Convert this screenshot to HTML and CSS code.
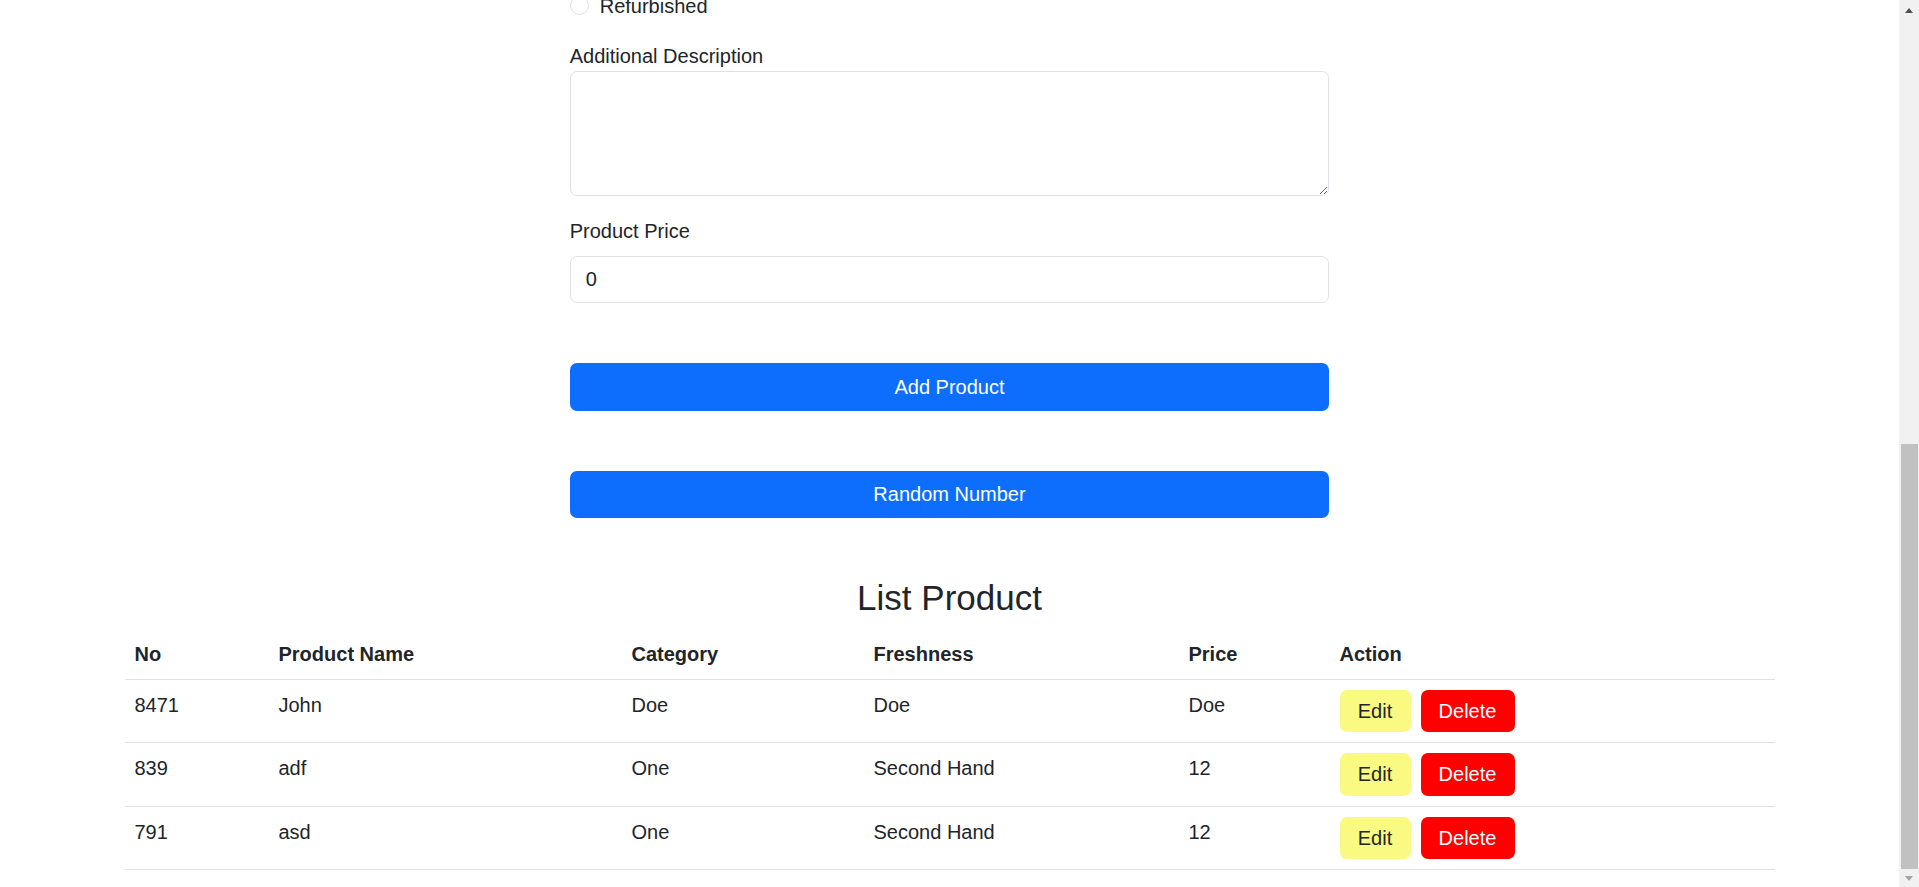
FILE: index.html
```html
<!DOCTYPE html>
<html lang="en">
<head>
<meta charset="utf-8">
<title>Product</title>
<link rel="stylesheet" href="styles.css">
</head>
<body>
<main class="page">
  <form class="product-form" onsubmit="return false">
    <div class="field">
      <label class="check"><input class="radio" type="radio" name="fresh"><span>Refurbished</span></label>
    </div>
    <div class="field">
      <label class="label-plain" for="pdesc">Additional Description</label>
      <textarea class="control area" id="pdesc"></textarea>
    </div>
    <div class="field">
      <label class="label-spaced" for="pprice">Product Price</label>
      <input class="control" id="pprice" type="text" value="0">
    </div>
    <button class="btn-primary add-btn" type="submit">Add Product</button>
    <button class="btn-primary random-btn" type="button">Random Number</button>
  </form>

  <section class="list">
    <h3 class="list-title">List Product</h3>
    <table class="product-table">
      <thead>
        <tr>
          <th class="c-no">No</th>
          <th class="c-name">Product Name</th>
          <th class="c-cat">Category</th>
          <th class="c-fresh">Freshness</th>
          <th class="c-price">Price</th>
          <th class="c-action">Action</th>
        </tr>
      </thead>
      <tbody>
        <tr>
          <td>8471</td><td>John</td><td>Doe</td><td>Doe</td><td>Doe</td>
          <td><div class="actions"><button class="btn-edit" type="button">Edit</button><button class="btn-delete" type="button">Delete</button></div></td>
        </tr>
        <tr>
          <td>839</td><td>adf</td><td>One</td><td>Second Hand</td><td>12</td>
          <td><div class="actions"><button class="btn-edit" type="button">Edit</button><button class="btn-delete" type="button">Delete</button></div></td>
        </tr>
        <tr>
          <td>791</td><td>asd</td><td>One</td><td>Second Hand</td><td>12</td>
          <td><div class="actions"><button class="btn-edit" type="button">Edit</button><button class="btn-delete" type="button">Delete</button></div></td>
        </tr>
      </tbody>
    </table>
  </section>
</main>

<div class="scrollbar" aria-hidden="true">
  <span class="sb-btn sb-up"><span class="arrow-up"></span></span>
  <span class="sb-track"><span class="sb-thumb"></span></span>
  <span class="sb-btn sb-down"><span class="arrow-down"></span></span>
</div>

<script src="script.js"></script>
</body>
</html>
```

FILE: styles.css
```css
* { box-sizing: border-box; }

html, body {
  margin: 0;
  padding: 0;
}

body {
  padding-right: 20px;
  font-family: "Liberation Sans", Arial, sans-serif;
  font-size: 20px;
  line-height: 1.5;
  color: #212529;
  background: #fff;
}

/* window scrollbar as shown in the screenshot */
.scrollbar {
  position: fixed;
  top: 0;
  right: 0;
  width: 20px;
  height: 100vh;
  display: flex;
  flex-direction: column;
  background: #f1f1f1;
}
.sb-btn {
  display: flex;
  align-items: center;
  justify-content: center;
  flex: none;
}
.sb-up { height: 20px; }
.sb-down { height: 18px; }
.sb-track {
  flex: 1;
  display: flex;
  flex-direction: column;
  justify-content: flex-end;
}
.sb-thumb {
  display: block;
  height: 425px;
  margin: 0 1px 0 2px;
  background: #c1c1c1;
}
.arrow-up {
  width: 0;
  height: 0;
  border-left: 4.5px solid transparent;
  border-right: 4.5px solid transparent;
  border-bottom: 5px solid #505050;
}
.arrow-down {
  width: 0;
  height: 0;
  border-left: 4.5px solid transparent;
  border-right: 4.5px solid transparent;
  border-top: 5px solid #a3a3a3;
}

.product-form {
  width: 40%;
  margin: 0 auto;
}

.field { margin-bottom: 20px; }

.label-spaced {
  display: block;
  margin-bottom: 10px;
}
.label-plain {
  display: block;
  margin: 0;
}

.control {
  display: block;
  width: 100%;
  height: 47px;
  padding: 7.5px 15px;
  font: inherit;
  color: #212529;
  background: #fff;
  border: 1px solid #dee2e6;
  border-radius: 7px;
}
.area {
  height: 125px;
  resize: vertical;
}

.check {
  display: flex;
  align-items: flex-start;
  min-height: 30px;
  margin-bottom: 2.5px;
}
.radio {
  appearance: none;
  -webkit-appearance: none;
  flex: none;
  width: 19px;
  height: 19px;
  margin: 5px 11px 0 0;
  border: 1px solid #dfe1e4;
  border-radius: 50%;
  background: #fff;
}

.btn-primary {
  display: block;
  width: 100%;
  height: 47.5px;
  padding: 0;
  font: inherit;
  color: #fff;
  background: #0d6efd;
  border: 0;
  border-radius: 7px;
}
.add-btn { margin-top: 60px; }
.random-btn { margin-top: 60px; }

.list {
  width: 1650px;
  margin: 58.5px auto 0;
}
.list-title {
  margin: 0 0 10px;
  text-align: center;
  font-size: 35px;
  line-height: 42px;
  font-weight: 400;
}

.product-table {
  width: 100%;
  border-collapse: collapse;
  table-layout: fixed;
  margin-bottom: 17px;
}
.product-table th,
.product-table td {
  padding: 10px;
  text-align: left;
  vertical-align: top;
  border-bottom: 1px solid #dee2e6;
}
.product-table th { font-weight: 700; }

.c-no { width: 144px; }
.c-name { width: 353px; }
.c-cat { width: 242px; }
.c-fresh { width: 315px; }
.c-price { width: 151px; }
.c-action { width: 445px; }

.actions {
  display: flex;
  gap: 10px;
}
.btn-edit,
.btn-delete {
  height: 42.5px;
  padding: 0;
  font: inherit;
  border: 0;
  border-radius: 7px;
}
.btn-edit {
  width: 71px;
  color: #212529;
  background: #fafa82;
}
.btn-delete {
  width: 94px;
  color: #fff;
  background: #ff0000;
}
```

FILE: script.js
```js
function scrollToEnd() {
  window.scrollTo(0, document.documentElement.scrollHeight);
}
scrollToEnd();
window.addEventListener('load', scrollToEnd);
```
